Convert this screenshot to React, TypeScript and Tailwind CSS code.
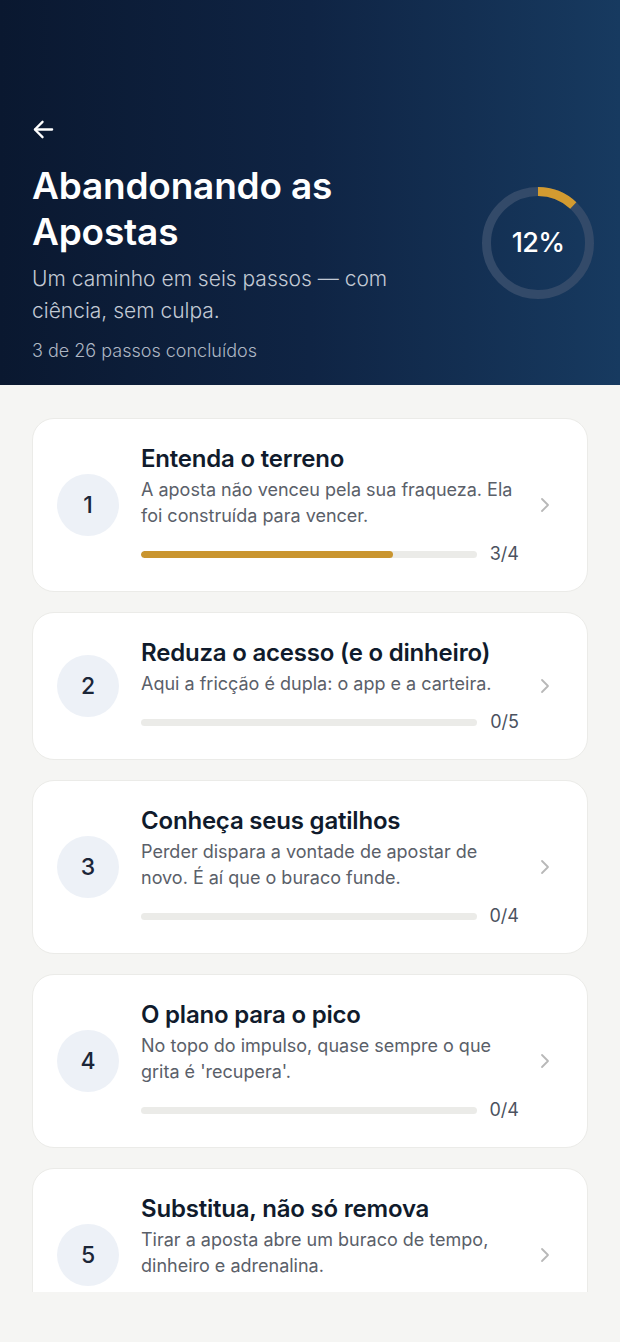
import React from "react";

type Step = { n: number; title: string; desc: string; done: number; total: number };

const steps: Step[] = [
  { n: 1, title: "Entenda o terreno", desc: "A aposta não venceu pela sua fraqueza. Ela foi construída para vencer.", done: 3, total: 4 },
  { n: 2, title: "Reduza o acesso (e o dinheiro)", desc: "Aqui a fricção é dupla: o app e a carteira.", done: 0, total: 5 },
  { n: 3, title: "Conheça seus gatilhos", desc: "Perder dispara a vontade de apostar de novo. É aí que o buraco funde.", done: 0, total: 4 },
  { n: 4, title: "O plano para o pico", desc: "No topo do impulso, quase sempre o que grita é 'recupera'.", done: 0, total: 4 },
  { n: 5, title: "Substitua, não só remova", desc: "Tirar a aposta abre um buraco de tempo, dinheiro e adrenalina.", done: 0, total: 4 },
];

function Ring({ pct }: { pct: number }) {
  const r = 51.5;
  const c = 2 * Math.PI * r;
  return (
    <div className="relative w-[112px] h-[112px] shrink-0">
      <svg width="112" height="112" viewBox="0 0 112 112" className="-rotate-90">
        <circle cx="56" cy="56" r={r} fill="none" stroke="#334a69" strokeWidth="9" />
        <circle
          cx="56"
          cy="56"
          r={r}
          fill="none"
          stroke="#d39b30"
          strokeWidth="9"
          strokeDasharray={`${(c * pct) / 100} ${c}`}
        />
      </svg>
      <div className="absolute inset-0 flex items-center justify-center text-white text-[27px] font-medium tracking-tight">
        {pct}%
      </div>
    </div>
  );
}

function Card({ s }: { s: Step }) {
  const pct = (s.done / s.total) * 100;
  return (
    <div className="bg-white rounded-[22px] border border-[#ebebe8] pl-[24px] pr-[30px] pt-[25px] pb-[25px] flex items-center">
      <div className="w-[62px] h-[62px] rounded-full bg-[#edf1f7] flex items-center justify-center text-[23px] font-medium text-[#1b2638] shrink-0">
        {s.n}
      </div>
      <div className="flex-1 ml-[22px] min-w-0">
        <div className="text-[24px] leading-[30px] font-semibold text-[#101b2c] tracking-[-0.2px]">{s.title}</div>
        <div className="mt-[3px] text-[18px] leading-[26px] text-[#5a6069]">{s.desc}</div>
        <div className="mt-[13px] flex items-center gap-[13px]">
          <div className="flex-1 h-[7px] rounded-full bg-[#ebebe8] overflow-hidden">
            <div className="h-full rounded-full bg-[#c9952f]" style={{ width: `${pct}%` }} />
          </div>
          <div className="text-[18px] leading-[24px] text-[#4b5260]">
            {s.done}/{s.total}
          </div>
        </div>
      </div>
      <div className="ml-[14px] w-6 flex justify-center shrink-0">
        <svg width="30" height="30" viewBox="0 0 24 24" fill="none" stroke="#b8b8b8" strokeWidth="1.8" strokeLinecap="round" strokeLinejoin="round">
          <path d="m9 18 6-6-6-6" />
        </svg>
      </div>
    </div>
  );
}

export default function App() {
  return (
    <div className="w-[620px] h-[1342px] overflow-hidden bg-[#f5f5f3] font-['Inter','Noto_Sans',sans-serif]">
      <div className="h-[385px] bg-gradient-to-r from-[#0a1830] via-[#0f2444] to-[#173a60] px-[32px] pt-[118px]">
        <svg width="23" height="23" viewBox="0 0 24 24" fill="none" stroke="white" strokeWidth="2.4" strokeLinecap="round" strokeLinejoin="round">
          <path d="M21 12H3.5" />
          <path d="M11 4 3 12l8 8" />
        </svg>
        <div className="flex items-center mt-[22px]">
          <div className="flex-1">
            <h1 className="text-[37px] leading-[46px] font-semibold text-white tracking-[-0.2px]">
              Abandonando as
              <br />
              Apostas
            </h1>
            <p className="mt-[8px] text-[21px] leading-[32px] text-[#c3cad5] font-light w-[390px]">
              Um caminho em seis passos — com ciência, sem culpa.
            </p>
            <p className="mt-[12px] text-[18px] leading-[24px] text-[#aeb7c4] font-light">3 de 26 passos concluídos</p>
          </div>
          <div className="mr-[-6px] mb-[40px]">
            <Ring pct={12} />
          </div>
        </div>
      </div>
      <div className="h-[907px] overflow-hidden px-[32px] pt-[33px] flex flex-col gap-[20px]">
        {steps.map((s) => (
          <Card key={s.n} s={s} />
        ))}
      </div>
    </div>
  );
}
